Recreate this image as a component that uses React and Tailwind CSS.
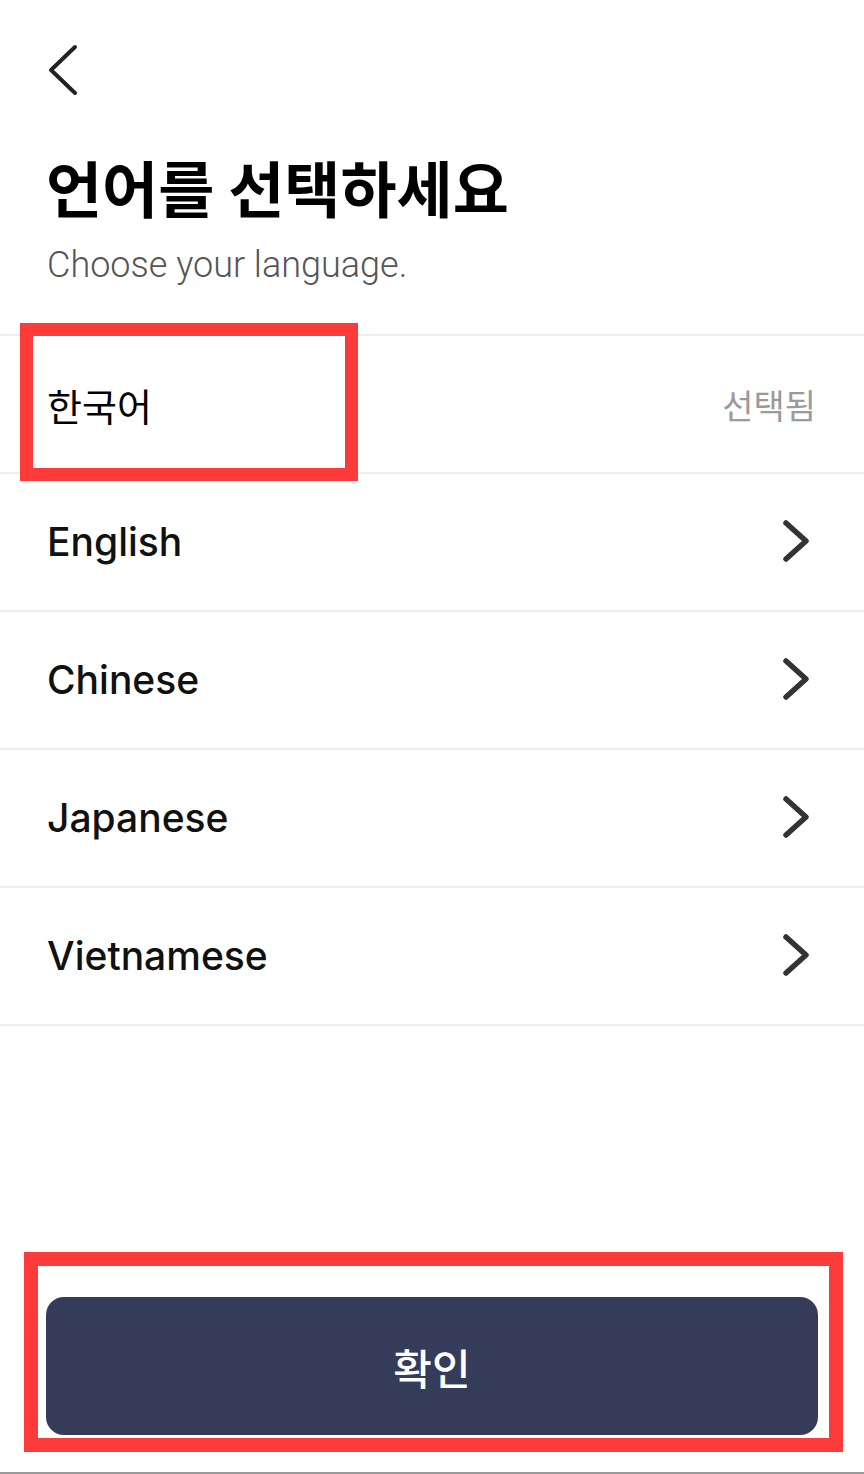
import React from 'react';

const languages = ['English', 'Chinese', 'Japanese', 'Vietnamese'];

const ChevronRight = () => (
  <svg width="32" height="48" viewBox="0 0 32 48" fill="none" className="mr-[52px]">
    <path d="M6 5 L26 23 L6 41" stroke="#333333" strokeWidth="5.5" strokeLinecap="round" strokeLinejoin="round" />
  </svg>
);

const App = () => {
  return (
    <div className="relative w-[864px] h-[1474px] bg-white flex flex-col overflow-hidden font-['Inter','Noto_Sans_CJK_KR',sans-serif]">
      {/* Header */}
      <div className="pt-[40px] pl-[44px]">
        <svg width="40" height="60" viewBox="0 0 40 60" fill="none">
          <path d="M31 7 L7 30 L31 53" stroke="#222222" strokeWidth="4" strokeLinecap="round" strokeLinejoin="round" />
        </svg>
      </div>
      <h1 className="mt-[56px] pl-[46px] text-[61px] leading-none font-bold text-black font-['Noto_Sans_CJK_KR',sans-serif]">
        언어를 선택하세요
      </h1>
      <p className="mt-[30px] pl-[47px] text-[36px] leading-none font-light text-[#555555] font-['Roboto',sans-serif]">
        Choose your language.
      </p>

      {/* Language list */}
      <ul className="mt-[51px] border-t-2 border-[#eeeeee]">
        <li className="h-[138px] flex items-center justify-between border-b-2 border-[#eeeeee] pl-[47px] pr-[48px]">
          <span className="text-[38px] text-black font-['Noto_Sans_CJK_KR',sans-serif]">한국어</span>
          <span className="text-[34px] text-[#9a9a9a] font-['Noto_Sans_CJK_KR',sans-serif]">선택됨</span>
        </li>
        {languages.map((lang) => (
          <li key={lang} className="h-[138px] flex items-center justify-between border-b-2 border-[#eeeeee] pl-[47px]">
            <span className="text-[39px] font-medium text-[#111111] font-['Inter',sans-serif]">{lang}</span>
            <ChevronRight />
          </li>
        ))}
      </ul>

      <div className="flex-1" />

      {/* Confirm button */}
      <div className="px-[46px] pb-[37px]">
        <button className="w-full h-[138px] rounded-[18px] bg-[#343c5a] text-white text-[42px] font-medium font-['Noto_Sans_CJK_KR',sans-serif]">
          확인
        </button>
      </div>
      <div className="h-[2px] bg-[#9a9a9a]" />

      {/* Red annotation boxes */}
      <div className="absolute left-[20px] top-[323px] w-[338px] h-[158px] border-[13px] border-[#fd3a3a]" />
      <div className="absolute left-[24px] top-[1252px] w-[819px] h-[200px] border-[14px] border-[#fd3a3a]" />
    </div>
  );
};

export default App;
